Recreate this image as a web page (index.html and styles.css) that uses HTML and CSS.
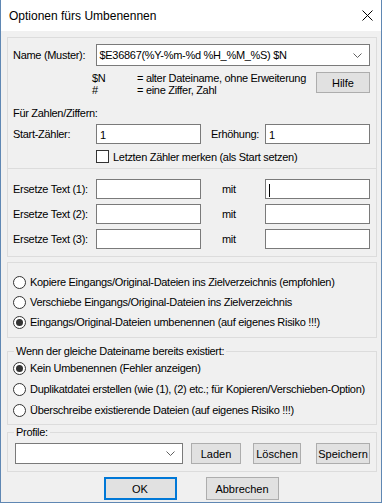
FILE: index.html
```html
<!DOCTYPE html>
<html lang="de">
<head>
    <meta charset="UTF-8" />
    <title>Optionen fürs Umbenennen</title>
    <link rel="stylesheet" href="styles.css">
</head>
<body>
    <div class="window">
        <div class="titlebar">
            <span class="title">Optionen fürs Umbenennen</span>
            <svg class="close" width="11" height="11" viewBox="0 0 11 11">
                <path d="M0.5 0.5 L10.5 10.5 M10.5 0.5 L0.5 10.5" stroke="#000" stroke-width="1" fill="none" />
            </svg>
        </div>

        <div class="content">
            <div class="group name-group">
                <div class="name-row">
                    <span class="label">Name (Muster):</span>
                    <div class="combo wide">
                        <span>$E36867(%Y-%m-%d %H_%M_%S) $N</span>
                        <svg width="9" height="5" viewBox="0 0 9 5">
                            <polyline points="0.5,0.5 4.5,4.5 8.5,0.5" stroke="#606060" fill="none" />
                        </svg>
                    </div>
                </div>

                <div class="hint-row">
                    <div class="hints">
                        <span>$N</span><span>= alter Dateiname, ohne Erweiterung</span>
                        <span>#</span><span>= eine Ziffer, Zahl</span>
                    </div>
                    <button class="btn help">Hilfe</button>
                </div>

                <div class="caption">Für Zahlen/Ziffern:</div>

                <div class="counter-row">
                    <span class="label">Start-Zähler:</span>
                    <div class="field">1</div>
                    <span></span>
                    <span class="label">Erhöhung:</span>
                    <div class="field">1</div>
                </div>

                <div class="check-row">
                    <span class="checkbox"></span>
                    <span>Letzten Zähler merken (als Start setzen)</span>
                </div>
            </div>

            <div class="group replace-group">
                <div class="replace-row">
                    <span class="label">Ersetze Text (1):</span>
                    <div class="field"></div>
                    <span></span>
                    <span class="label">mit</span>
                    <div class="field"><span class="caret"></span></div>
                </div>
                <div class="replace-row">
                    <span class="label">Ersetze Text (2):</span>
                    <div class="field"></div>
                    <span></span>
                    <span class="label">mit</span>
                    <div class="field"></div>
                </div>
                <div class="replace-row">
                    <span class="label">Ersetze Text (3):</span>
                    <div class="field"></div>
                    <span></span>
                    <span class="label">mit</span>
                    <div class="field"></div>
                </div>
            </div>

            <div class="group mode-group">
                <div class="radio-row"><span class="radio"></span>Kopiere Eingangs/Original-Dateien ins Zielverzeichnis (empfohlen)</div>
                <div class="radio-row"><span class="radio"></span>Verschiebe Eingangs/Original-Dateien ins Zielverzeichnis</div>
                <div class="radio-row"><span class="radio on"></span>Eingangs/Original-Dateien umbenennen (auf eigenes Risiko !!!)</div>
            </div>

            <fieldset class="group exists-group">
                <legend>Wenn der gleiche Dateiname bereits existiert:</legend>
                <div class="radio-row"><span class="radio on"></span>Kein Umbenennen (Fehler anzeigen)</div>
                <div class="radio-row"><span class="radio"></span>Duplikatdatei erstellen (wie (1), (2) etc.; für Kopieren/Verschieben-Option)</div>
                <div class="radio-row"><span class="radio"></span>Überschreibe existierende Dateien (auf eigenes Risiko !!!)</div>
            </fieldset>

            <fieldset class="group profile-group">
                <legend>Profile:</legend>
                <div class="profile-row">
                    <div class="combo profile">
                        <span></span>
                        <svg width="9" height="5" viewBox="0 0 9 5">
                            <polyline points="0.5,0.5 4.5,4.5 8.5,0.5" stroke="#606060" fill="none" />
                        </svg>
                    </div>
                    <button class="btn load">Laden</button>
                    <button class="btn delete">Löschen</button>
                    <button class="btn save">Speichern</button>
                </div>
            </fieldset>
        </div>

        <div class="footer">
            <button class="btn ok">OK</button>
            <button class="btn cancel">Abbrechen</button>
        </div>
    </div>
</body>
</html>
```

FILE: styles.css
```css
body {
    margin: 0;
    background: #fff;
    font-family: "Liberation Sans", Arial, sans-serif;
    font-size: 11px;
    letter-spacing: -0.3px;
    color: #000;
}

.window {
    width: 382px;
    height: 503px;
    box-sizing: border-box;
    border: 1px solid #5f87b3;
    border-top: none;
    background: #f0f0f0;
    display: flex;
    flex-direction: column;
}

.titlebar {
    height: 31px;
    flex-shrink: 0;
    background: #fff;
    display: flex;
    align-items: center;
    justify-content: space-between;
    padding: 0 8px 0 8px;
    font-size: 12px;
    letter-spacing: 0;
}

.content {
    padding-left: 6px;
}

.group {
    width: 370px;
    box-sizing: border-box;
    border: 1px solid #dcdcdc;
    margin: 0;
    padding: 0 6px 0 5px;
    min-width: 0;
}

/* name / counters */
.name-group {
    margin-top: 6px;
    padding-top: 6px;
    padding-bottom: 5px;
}

.name-row {
    display: flex;
    align-items: center;
}

.label {
    white-space: nowrap;
}

.name-row .label {
    width: 83px;
}

.combo {
    box-sizing: border-box;
    border: 1px solid #7a7a7a;
    background: #fff;
    display: flex;
    align-items: center;
    justify-content: space-between;
    padding: 0 7px 0 3px;
}

.combo.wide {
    width: 276px;
    height: 22px;
}

.hint-row {
    display: flex;
    align-items: flex-start;
    margin-top: 6px;
}

.hints {
    display: grid;
    grid-template-columns: 45px auto;
    line-height: 12px;
    margin-left: 79px;
}

.btn {
    background: #e1e1e1;
    border: 1px solid #adadad;
    font: inherit;
    color: #000;
    padding: 0;
    box-sizing: border-box;
}

.btn.help {
    margin-left: auto;
    width: 54px;
    height: 21px;
}

.caption {
    margin-top: 9px;
    line-height: 16px;
}

.counter-row,
.replace-row {
    display: grid;
    align-items: center;
    height: 20px;
}

.counter-row {
    margin-top: 3px;
    grid-template-columns: 83px 105px 10px 54px 105px;
}

.field {
    height: 20px;
    box-sizing: border-box;
    border: 1px solid #7a7a7a;
    background: #fff;
    padding: 2px 0 0 3px;
    line-height: 16px;
    display: flex;
    align-items: center;
}

.caret {
    width: 1px;
    height: 13px;
    background: #000;
}

.check-row {
    display: flex;
    align-items: center;
    gap: 4px;
    height: 13px;
    margin-top: 6px;
    margin-left: 83px;
}

.checkbox {
    width: 13px;
    height: 13px;
    box-sizing: border-box;
    border: 1px solid #333;
    background: #fff;
}

/* replace text */
.replace-group {
    border-top: none;
    padding-top: 10px;
    padding-bottom: 7px;
    display: flex;
    flex-direction: column;
    gap: 5px;
}

.replace-row {
    grid-template-columns: 83px 105px 21px 43px 105px;
}

/* radio groups */
.mode-group {
    margin-top: 5px;
    padding-top: 9px;
    padding-bottom: 5px;
}

.radio-row {
    display: flex;
    align-items: center;
    gap: 4px;
    height: 20px;
    white-space: nowrap;
}

.radio {
    width: 13px;
    height: 13px;
    box-sizing: border-box;
    border: 1px solid #333;
    border-radius: 50%;
    background: #fff;
    display: flex;
    align-items: center;
    justify-content: center;
    flex-shrink: 0;
}

.radio.on::after {
    content: "";
    width: 7px;
    height: 7px;
    border-radius: 50%;
    background: #333;
}

fieldset.group legend {
    line-height: 14px;
    padding: 0 2px;
    margin-left: 1px;
}

.exists-group {
    margin-top: 6px;
    padding-bottom: 4px;
    display: flex;
    flex-direction: column;
    gap: 1px;
}

.profile-group {
    padding-top: 4px;
    padding-bottom: 7px;
}

.profile-row {
    display: flex;
    align-items: flex-start;
    height: 21px;
}

.combo.profile {
    width: 168px;
    height: 21px;
    margin-left: 2px;
}

.profile-row .btn {
    height: 21px;
}

.btn.load {
    width: 50px;
    margin-left: 8px;
}

.btn.delete {
    width: 48px;
    margin-left: 12px;
}

.btn.save {
    width: 54px;
    margin-left: 15px;
}

/* dialog buttons */
.footer {
    display: flex;
    justify-content: center;
    gap: 29px;
    margin-top: 5px;
}

.footer .btn {
    width: 73px;
    height: 23px;
}

.btn.ok {
    border-color: #0078d7;
    box-shadow: inset 0 0 0 1px #0078d7;
}
```
